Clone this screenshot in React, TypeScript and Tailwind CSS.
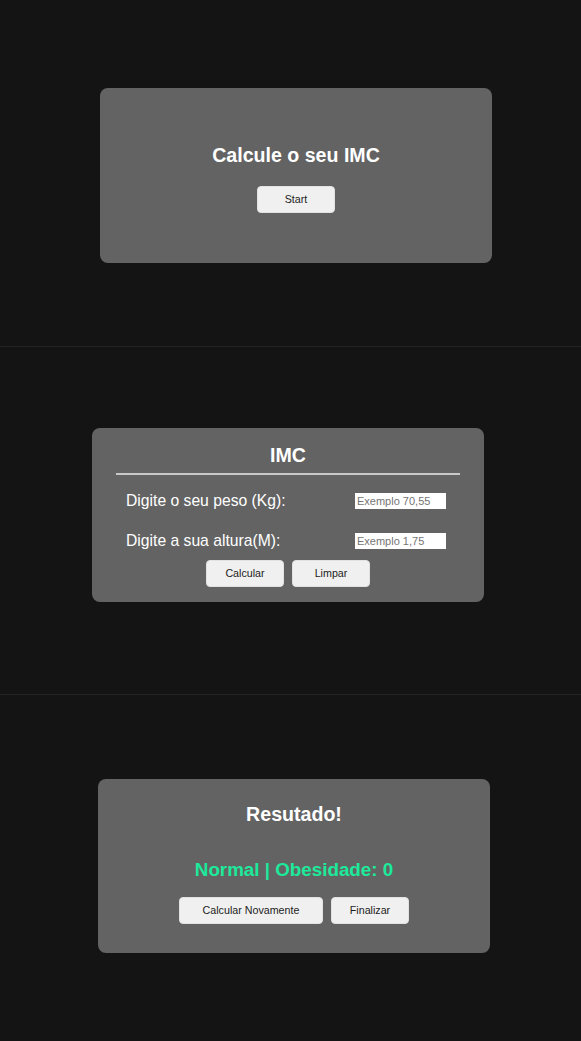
import React from "react";

const font = { fontFamily: '"Liberation Sans", Arial, sans-serif' };

function Button({ children, width }: { children: React.ReactNode; width: string }) {
	return (
		<button
			className={`${width} h-[27px] rounded-[4px] border border-[#e2e2e2] bg-[#f0f0f0] text-[10.7px] text-[#1c1c1c]`}
		>
			{children}
		</button>
	);
}

export default function App() {
	return (
		<div className="min-h-[1041px] w-full bg-[#141414]" style={font}>
			{/* tela inicial */}
			<section className="h-[347px] border-b border-[#242424] pl-[100px] pt-[88px]">
				<div className="flex h-[175px] w-[392px] flex-col items-center rounded-[8px] bg-[#636363] pt-[56px]">
					<h1 className="text-[19.6px] font-bold leading-[23px] text-white">Calcule o seu IMC</h1>
					<div className="mt-[19px]">
						<Button width="w-[78px]">Start</Button>
					</div>
				</div>
			</section>

			{/* formulario */}
			<section className="h-[348px] border-b border-[#242424] pl-[92px] pt-[81px]">
				<div className="flex h-[174px] w-[392px] flex-col rounded-[8px] bg-[#636363] pt-[16px]">
					<h2 className="text-center text-[19.6px] font-bold leading-[23px] text-white">IMC</h2>
					<div className="mx-[24px] mt-[6px] h-[2px] bg-[#c8c8c8]" />
					<div className="mt-[16px] flex h-[20px] items-center justify-between pl-[34px] pr-[38px]">
						<label className="text-[15.7px] leading-[20px] text-white">Digite o seu peso (Kg):</label>
						<input
							placeholder="Exemplo 70,55"
							className="h-[16px] w-[91px] bg-white px-[2px] text-[11px] text-black outline-none placeholder:text-[#757575]"
						/>
					</div>
					<div className="mt-[20px] flex h-[20px] items-center justify-between pl-[34px] pr-[38px]">
						<label className="text-[15.7px] leading-[20px] text-white">Digite a sua altura(M):</label>
						<input
							placeholder="Exemplo 1,75"
							className="h-[16px] w-[91px] bg-white px-[2px] text-[11px] text-black outline-none placeholder:text-[#757575]"
						/>
					</div>
					<div className="mt-[9px] flex justify-center gap-[8px]">
						<Button width="w-[78px]">Calcular</Button>
						<Button width="w-[78px]">Limpar</Button>
					</div>
				</div>
			</section>

			{/* resultado */}
			<section className="h-[346px] pl-[98px] pt-[84px]">
				<div className="flex h-[174px] w-[392px] flex-col items-center rounded-[8px] bg-[#636363] pt-[24px]">
					<h2 className="text-[19.6px] font-bold leading-[23px] text-white">Resutado!</h2>
					<p className="mt-[33px] text-[18.8px] font-bold leading-[22px] text-[#1de99b]">
						Normal | Obesidade: 0
					</p>
					<div className="mt-[16px] flex gap-[8px]">
						<Button width="w-[144px]">Calcular Novamente</Button>
						<Button width="w-[78px]">Finalizar</Button>
					</div>
				</div>
			</section>
		</div>
	);
}
